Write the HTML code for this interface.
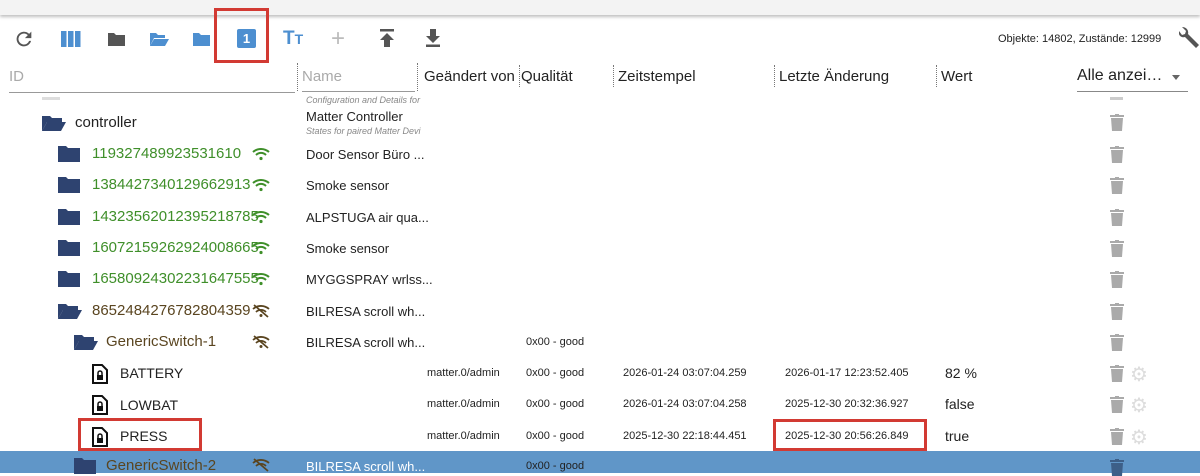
<!DOCTYPE html>
<html><head><meta charset="utf-8"><style>
body{margin:0;width:1200px;height:473px;overflow:hidden;background:#fff;font-family:"Liberation Sans",sans-serif;position:relative;color:#222}
.a{position:absolute;white-space:nowrap}
.top{position:absolute;left:0;top:0;width:1200px;height:15px;background:#f3f3f3;box-shadow:0 2px 3px rgba(0,0,0,.25)}
.hdr{font-size:15px;color:#222;top:68px}
.row{font-size:14px}
.id{font-size:15px}
.g{color:#3f8f2a}.b{color:#5a4520}
.gear{position:absolute;font-size:20px;color:#ddd}
</style></head><body>
<div class="top"></div>
<svg class="a" style="left:13px;top:28px" width="22" height="22" viewBox="0 0 24 24"><path d="M17.6 6.4A8 8 0 1 0 19.7 14h-2.1A6 6 0 1 1 12 6c1.7 0 3.1.7 4.2 1.8L13 11h7V4z" fill="#555"/></svg>
<svg class="a" style="left:61px;top:31px" width="20" height="16"><rect x="0" y="0" width="5.5" height="16" fill="#4d8fd0"/><rect x="7" y="0" width="5.5" height="16" fill="#4d8fd0"/><rect x="14" y="0" width="5.5" height="16" fill="#4d8fd0"/></svg>
<svg class="a" style="left:108px;top:32px" width="17" height="14"><path d="M0 1h6l2 2h9v11H0z" fill="#555"/></svg>
<svg class="a" style="left:150px;top:32px" width="19" height="14"><path d="M0 1h6l2 2h7v3H4L0 14z" fill="#4d8fd0"/><path d="M4 7h15l-4 7H0z" fill="#4d8fd0"/></svg>
<svg class="a" style="left:193px;top:32px" width="17" height="14"><path d="M0 1h6l2 2h9v11H0z" fill="#4d8fd0"/></svg>
<div class="a" style="left:237px;top:29px;width:19px;height:19px;background:#4d8fd0;border-radius:2px;color:#fff;font-size:13px;font-weight:bold;text-align:center;line-height:19px">1</div>
<div class="a" style="left:214px;top:8px;width:55px;height:55px;border:3px solid #d23a33;box-sizing:border-box"></div>
<div class="a" style="left:283px;top:28px;color:#4d8fd0;font-weight:bold;font-size:19px">T<span style="font-size:14px">T</span></div>
<div class="a" style="left:331px;top:25px;color:#bbb;font-size:24px">+</div>
<svg class="a" style="left:379px;top:29px" width="16" height="18"><rect x="1" y="0" width="14" height="2.5" fill="#555"/><path d="M8 4l7 7h-4v7H5v-7H1z" fill="#555"/></svg>
<svg class="a" style="left:425px;top:29px" width="16" height="18"><path d="M5 0h6v7h4l-7 7-7-7h4z" fill="#555"/><rect x="1" y="15.5" width="14" height="2.5" fill="#555"/></svg>
<div class="a" style="left:998px;top:33px;font-size:11px;color:#222">Objekte: 14802, Zustände: 12999</div>
<svg class="a" style="left:1179px;top:25px" width="22" height="24" viewBox="0 0 22 24"><path d="M3 2l4 4-1 3-3 1-3-4c-1 4 2 7 6 6l11 11 3-3L9 9c1-4-2-7-6-7z" fill="#555"/></svg>
<!-- header -->
<div class="a hdr" style="left:9px;color:#aaa">ID</div>
<div class="a" style="left:9px;top:92px;width:286px;height:1px;background:#999"></div>
<div class="a" style="left:297px;top:63px;height:28px;border-left:1px dotted #777"></div>
<div class="a hdr" style="left:302px;color:#aaa">Name</div>
<div class="a" style="left:302px;top:91px;width:113px;height:1px;background:#999"></div>
<div class="a" style="left:417px;top:63px;height:28px;border-left:1px dotted #777"></div>
<div class="a hdr" style="left:424px">Geändert von</div>
<div class="a" style="left:519px;top:65px;height:22px;border-left:1px dotted #777"></div>
<div class="a hdr" style="left:521px">Qualität</div>
<div class="a" style="left:613px;top:65px;height:22px;border-left:1px dotted #777"></div>
<div class="a hdr" style="left:618px">Zeitstempel</div>
<div class="a" style="left:774px;top:65px;height:22px;border-left:1px dotted #777"></div>
<div class="a hdr" style="left:779px">Letzte Änderung</div>
<div class="a" style="left:936px;top:65px;height:22px;border-left:1px dotted #777"></div>
<div class="a hdr" style="left:941px">Wert</div>
<div class="a hdr" style="left:1077px;font-size:16px;top:67px">Alle anzei…</div>
<div class="a" style="left:1172px;top:75px;border:4px solid transparent;border-top:5px solid #666"></div>
<div class="a" style="left:1077px;top:91px;width:111px;height:1px;background:#888"></div>
<!-- rows -->
<div class="a" style="left:42px;top:97px;width:18px;height:3px;background:#ddd"></div>
<div class="a" style="left:306px;top:95px;font-style:italic;color:#888;font-size:9px">Configuration and Details for</div>
<svg class="a" style="left:42px;top:115px" width="24" height="17"><path d="M0 1h8l2 2h10v4H5L0 16z" fill="#2e4370"/><path d="M5 7h19l-5 9H0z" fill="#2e4370"/></svg>
<div class="a id" style="left:75px;top:114px">controller</div>
<div class="a" style="left:306px;top:109px;font-size:13px">Matter Controller</div>
<div class="a" style="left:306px;top:126px;font-style:italic;color:#888;font-size:9px">States for paired Matter Devi</div>

<svg class="a" style="left:58px;top:146px" width="22" height="16"><path d="M0 0h8l2 2h12v14H0z" fill="#2e4370"/></svg>
<div class="a id g" style="left:92px;top:145px">119327489923531610</div>
<div class="a" style="left:306px;top:147px;font-size:13px">Door Sensor Büro ...</div>
<svg class="a" style="left:58px;top:177px" width="22" height="16"><path d="M0 0h8l2 2h12v14H0z" fill="#2e4370"/></svg>
<div class="a id g" style="left:92px;top:176px">1384427340129662913</div>
<div class="a" style="left:306px;top:178px;font-size:13px">Smoke sensor</div>
<svg class="a" style="left:58px;top:209px" width="22" height="16"><path d="M0 0h8l2 2h12v14H0z" fill="#2e4370"/></svg>
<div class="a id g" style="left:92px;top:208px">14323562012395218785</div>
<div class="a" style="left:306px;top:210px;font-size:13px">ALPSTUGA air qua...</div>
<svg class="a" style="left:58px;top:240px" width="22" height="16"><path d="M0 0h8l2 2h12v14H0z" fill="#2e4370"/></svg>
<div class="a id g" style="left:92px;top:239px">16072159262924008665</div>
<div class="a" style="left:306px;top:241px;font-size:13px">Smoke sensor</div>
<svg class="a" style="left:58px;top:271px" width="22" height="16"><path d="M0 0h8l2 2h12v14H0z" fill="#2e4370"/></svg>
<div class="a id g" style="left:92px;top:270px">16580924302231647555</div>
<div class="a" style="left:306px;top:272px;font-size:13px">MYGGSPRAY wrlss...</div>
<svg class="a" style="left:58px;top:303px" width="24" height="17"><path d="M0 1h8l2 2h10v4H5L0 16z" fill="#2e4370"/><path d="M5 7h19l-5 9H0z" fill="#2e4370"/></svg>
<div class="a id b" style="left:92px;top:302px">8652484276782804359</div>
<div class="a" style="left:306px;top:304px;font-size:13px">BILRESA scroll wh...</div>
<svg class="a" style="left:74px;top:334px" width="24" height="17"><path d="M0 1h8l2 2h10v4H5L0 16z" fill="#2e4370"/><path d="M5 7h19l-5 9H0z" fill="#2e4370"/></svg>
<div class="a id b" style="left:106px;top:333px">GenericSwitch-1</div>
<div class="a" style="left:306px;top:335px;font-size:13px">BILRESA scroll wh...</div>
<div class="a" style="left:526px;top:336px;font-size:11px">0x00 - good</div>

<!-- wifi icons -->
<svg class="a" style="left:252px;top:147px" width="18" height="14" viewBox="0 0 18 14"><path d="M1 5a12 12 0 0 1 16 0M4 8a7 7 0 0 1 10 0" stroke="#3f8f2a" stroke-width="2" fill="none"/><circle cx="9" cy="11.5" r="1.6" fill="#3f8f2a"/></svg>
<svg class="a" style="left:252px;top:178px" width="18" height="14" viewBox="0 0 18 14"><path d="M1 5a12 12 0 0 1 16 0M4 8a7 7 0 0 1 10 0" stroke="#3f8f2a" stroke-width="2" fill="none"/><circle cx="9" cy="11.5" r="1.6" fill="#3f8f2a"/></svg>
<svg class="a" style="left:252px;top:210px" width="18" height="14" viewBox="0 0 18 14"><path d="M1 5a12 12 0 0 1 16 0M4 8a7 7 0 0 1 10 0" stroke="#3f8f2a" stroke-width="2" fill="none"/><circle cx="9" cy="11.5" r="1.6" fill="#3f8f2a"/></svg>
<svg class="a" style="left:252px;top:241px" width="18" height="14" viewBox="0 0 18 14"><path d="M1 5a12 12 0 0 1 16 0M4 8a7 7 0 0 1 10 0" stroke="#3f8f2a" stroke-width="2" fill="none"/><circle cx="9" cy="11.5" r="1.6" fill="#3f8f2a"/></svg>
<svg class="a" style="left:252px;top:272px" width="18" height="14" viewBox="0 0 18 14"><path d="M1 5a12 12 0 0 1 16 0M4 8a7 7 0 0 1 10 0" stroke="#3f8f2a" stroke-width="2" fill="none"/><circle cx="9" cy="11.5" r="1.6" fill="#3f8f2a"/></svg>
<svg class="a" style="left:252px;top:304px" width="18" height="14" viewBox="0 0 18 14"><path d="M1 5a12 12 0 0 1 16 0M4 8a7 7 0 0 1 10 0M2 1l14 12" stroke="#5a4520" stroke-width="1.8" fill="none"/><circle cx="9" cy="11.5" r="1.5" fill="#5a4520"/></svg>
<svg class="a" style="left:252px;top:335px" width="18" height="14" viewBox="0 0 18 14"><path d="M1 5a12 12 0 0 1 16 0M4 8a7 7 0 0 1 10 0M2 1l14 12" stroke="#5a4520" stroke-width="1.8" fill="none"/><circle cx="9" cy="11.5" r="1.5" fill="#5a4520"/></svg>

<!-- state rows -->
<svg class="a" style="left:92px;top:364px" width="16" height="20"><path d="M1 1h9l5 5v13H1z" fill="#fff" stroke="#111" stroke-width="2"/><rect x="5" y="11" width="6" height="5" fill="#111"/><path d="M6 11V9a2 2 0 0 1 4 0v2" stroke="#111" stroke-width="1.5" fill="none"/></svg>
<div class="a row" style="left:120px;top:365px">BATTERY</div>
<div class="a" style="left:427px;top:367px;font-size:11px">matter.0/admin</div>
<div class="a" style="left:526px;top:367px;font-size:11px">0x00 - good</div>
<div class="a" style="left:623px;top:367px;font-size:11px">2026-01-24 03:07:04.259</div>
<div class="a" style="left:785px;top:367px;font-size:11px">2026-01-17 12:23:52.405</div>
<div class="a" style="left:945px;top:365px;font-size:14px">82 %</div>

<svg class="a" style="left:92px;top:395px" width="16" height="20"><path d="M1 1h9l5 5v13H1z" fill="#fff" stroke="#111" stroke-width="2"/><rect x="5" y="11" width="6" height="5" fill="#111"/><path d="M6 11V9a2 2 0 0 1 4 0v2" stroke="#111" stroke-width="1.5" fill="none"/></svg>
<div class="a row" style="left:120px;top:397px">LOWBAT</div>
<div class="a" style="left:427px;top:398px;font-size:11px">matter.0/admin</div>
<div class="a" style="left:526px;top:398px;font-size:11px">0x00 - good</div>
<div class="a" style="left:623px;top:398px;font-size:11px">2026-01-24 03:07:04.258</div>
<div class="a" style="left:785px;top:398px;font-size:11px">2025-12-30 20:32:36.927</div>
<div class="a" style="left:945px;top:396px;font-size:14px">false</div>

<svg class="a" style="left:92px;top:427px" width="16" height="20"><path d="M1 1h9l5 5v13H1z" fill="#fff" stroke="#111" stroke-width="2"/><rect x="5" y="11" width="6" height="5" fill="#111"/><path d="M6 11V9a2 2 0 0 1 4 0v2" stroke="#111" stroke-width="1.5" fill="none"/></svg>
<div class="a row" style="left:120px;top:428px">PRESS</div>
<div class="a" style="left:78px;top:418px;width:124px;height:33px;border:3px solid #d23a33;box-sizing:border-box"></div>
<div class="a" style="left:427px;top:430px;font-size:11px">matter.0/admin</div>
<div class="a" style="left:526px;top:430px;font-size:11px">0x00 - good</div>
<div class="a" style="left:623px;top:430px;font-size:11px">2025-12-30 22:18:44.451</div>
<div class="a" style="left:785px;top:430px;font-size:11px">2025-12-30 20:56:26.849</div>
<div class="a" style="left:773px;top:419px;width:154px;height:32px;border:3px solid #d23a33;box-sizing:border-box"></div>
<div class="a" style="left:945px;top:428px;font-size:14px">true</div>

<!-- selected row -->
<div class="a" style="left:0;top:451px;width:1200px;height:22px;background:#6096c8"></div>
<svg class="a" style="left:74px;top:458px" width="22" height="16"><path d="M0 0h8l2 2h12v14H0z" fill="#2e4370"/></svg>
<div class="a id b" style="left:106px;top:457px">GenericSwitch-2</div>
<svg class="a" style="left:252px;top:458px" width="18" height="14" viewBox="0 0 18 14"><path d="M1 5a12 12 0 0 1 16 0M4 8a7 7 0 0 1 10 0M2 1l14 12" stroke="#5a4520" stroke-width="1.8" fill="none"/></svg>
<div class="a" style="left:306px;top:459px;font-size:13px;color:#fff">BILRESA scroll wh...</div>
<div class="a" style="left:526px;top:460px;font-size:11px;color:#222">0x00 - good</div>

<!-- trash & gears -->
<div class="a" style="left:1110px;top:97px;width:13px;height:3px;background:#ccc"></div>
<svg class="a" style="left:1110px;top:114px" width="14" height="17"><rect x="0" y="1" width="14" height="2" fill="#aaa"/><rect x="5" y="0" width="4" height="2" fill="#aaa"/><path d="M1 4h12l-1 13H2z" fill="#aaa"/></svg>
<svg class="a" style="left:1110px;top:146px" width="14" height="17"><rect x="0" y="1" width="14" height="2" fill="#aaa"/><rect x="5" y="0" width="4" height="2" fill="#aaa"/><path d="M1 4h12l-1 13H2z" fill="#aaa"/></svg>
<svg class="a" style="left:1110px;top:177px" width="14" height="17"><rect x="0" y="1" width="14" height="2" fill="#aaa"/><rect x="5" y="0" width="4" height="2" fill="#aaa"/><path d="M1 4h12l-1 13H2z" fill="#aaa"/></svg>
<svg class="a" style="left:1110px;top:209px" width="14" height="17"><rect x="0" y="1" width="14" height="2" fill="#aaa"/><rect x="5" y="0" width="4" height="2" fill="#aaa"/><path d="M1 4h12l-1 13H2z" fill="#aaa"/></svg>
<svg class="a" style="left:1110px;top:240px" width="14" height="17"><rect x="0" y="1" width="14" height="2" fill="#aaa"/><rect x="5" y="0" width="4" height="2" fill="#aaa"/><path d="M1 4h12l-1 13H2z" fill="#aaa"/></svg>
<svg class="a" style="left:1110px;top:271px" width="14" height="17"><rect x="0" y="1" width="14" height="2" fill="#aaa"/><rect x="5" y="0" width="4" height="2" fill="#aaa"/><path d="M1 4h12l-1 13H2z" fill="#aaa"/></svg>
<svg class="a" style="left:1110px;top:303px" width="14" height="17"><rect x="0" y="1" width="14" height="2" fill="#aaa"/><rect x="5" y="0" width="4" height="2" fill="#aaa"/><path d="M1 4h12l-1 13H2z" fill="#aaa"/></svg>
<svg class="a" style="left:1110px;top:334px" width="14" height="17"><rect x="0" y="1" width="14" height="2" fill="#aaa"/><rect x="5" y="0" width="4" height="2" fill="#aaa"/><path d="M1 4h12l-1 13H2z" fill="#aaa"/></svg>
<svg class="a" style="left:1110px;top:365px" width="14" height="17"><rect x="0" y="1" width="14" height="2" fill="#aaa"/><rect x="5" y="0" width="4" height="2" fill="#aaa"/><path d="M1 4h12l-1 13H2z" fill="#aaa"/></svg>
<svg class="a" style="left:1110px;top:396px" width="14" height="17"><rect x="0" y="1" width="14" height="2" fill="#aaa"/><rect x="5" y="0" width="4" height="2" fill="#aaa"/><path d="M1 4h12l-1 13H2z" fill="#aaa"/></svg>
<svg class="a" style="left:1110px;top:428px" width="14" height="17"><rect x="0" y="1" width="14" height="2" fill="#aaa"/><rect x="5" y="0" width="4" height="2" fill="#aaa"/><path d="M1 4h12l-1 13H2z" fill="#aaa"/></svg>
<svg class="a" style="left:1110px;top:459px" width="14" height="17"><rect x="0" y="1" width="14" height="2" fill="#3d5f88"/><rect x="5" y="0" width="4" height="2" fill="#3d5f88"/><path d="M1 4h12l-1 13H2z" fill="#3d5f88"/></svg>
<div class="gear" style="left:1130px;top:362px">⚙</div>
<div class="gear" style="left:1130px;top:393px">⚙</div>
<div class="gear" style="left:1130px;top:425px">⚙</div>
</body></html>
